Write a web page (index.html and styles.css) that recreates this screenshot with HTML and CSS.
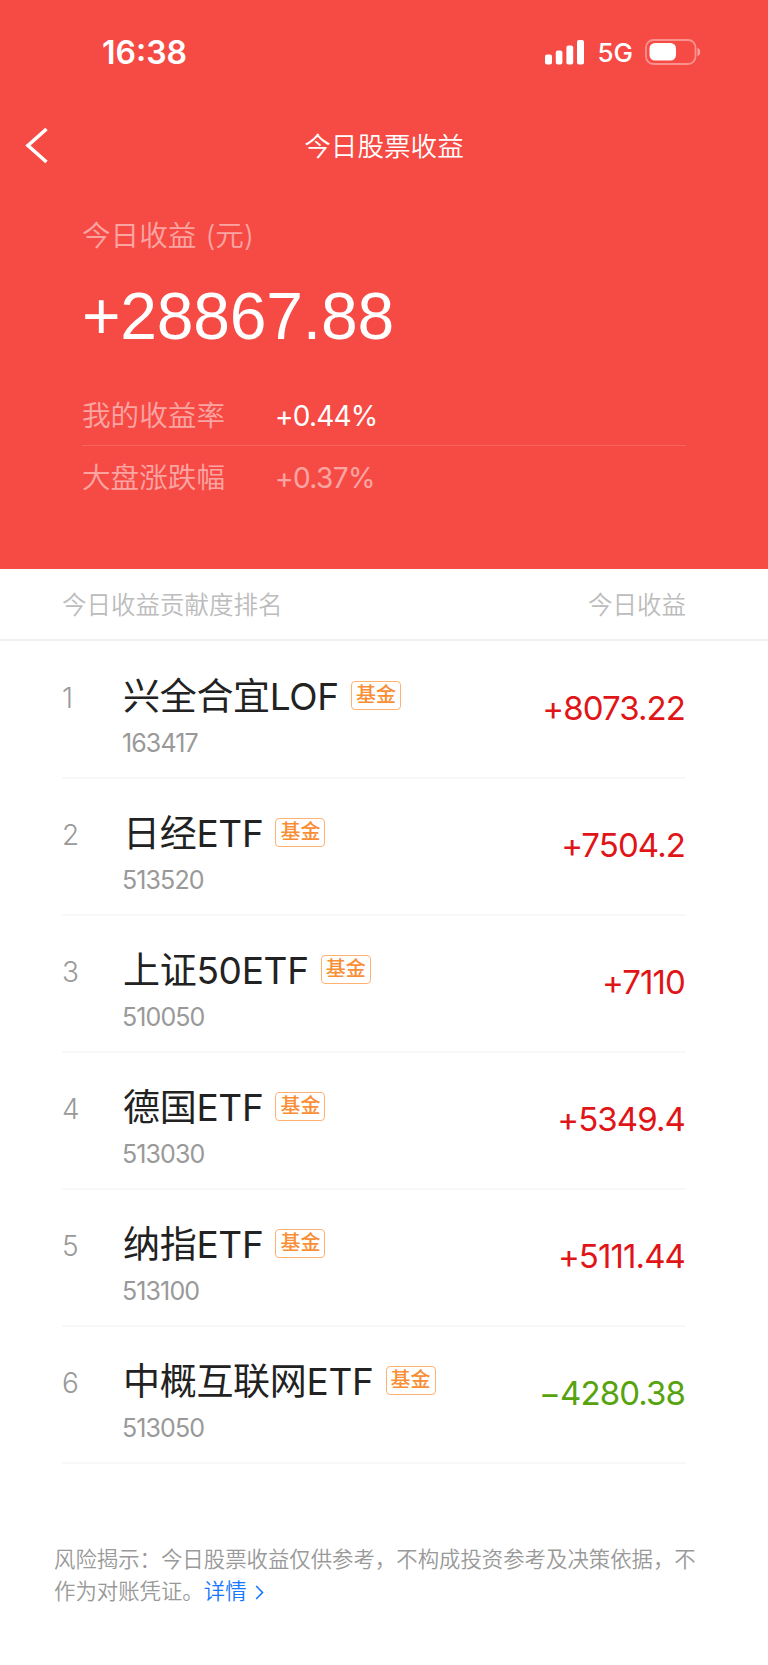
FILE: index.html
```html
<!DOCTYPE html>
<html lang="zh-CN">
<head>
  <meta charset="UTF-8" />
  <meta name="viewport" content="width=device-width, initial-scale=1.0"/>
  <title>今日股票收益</title>
  <link rel="stylesheet" href="styles.css">
</head>
<body>
  <header class="hero">
    <div class="status-bar">
      <span class="time">16:38</span>
      <div class="status-icons">
        <svg class="signal" width="39" height="25" viewBox="0 0 39 25" fill="#fff">
          <rect x="0" y="14.5" width="7" height="10" rx="2"/>
          <rect x="10.8" y="10.5" width="6.6" height="14" rx="2"/>
          <rect x="21.4" y="5.5" width="6.8" height="19" rx="2"/>
          <rect x="32" y="0" width="7" height="24.5" rx="2"/>
        </svg>
        <span class="network">5G</span>
        <svg class="battery" width="56" height="26" viewBox="0 0 56 26">
          <rect x="1" y="1" width="49.5" height="24" rx="7.5" fill="none" stroke="#fff" stroke-opacity=".4" stroke-width="1.8"/>
          <rect x="4.5" y="4" width="26.5" height="17.5" rx="5.5" fill="#fff"/>
          <path d="M52.5 9v8c3.600-1 3.600-7 0-8z" fill="#fff" fill-opacity=".5"/>
        </svg>
      </div>
    </div>

    <nav class="nav-bar">
      <svg class="back" width="24" height="38" viewBox="0 0 24 38" fill="none" stroke="#fff" stroke-width="3.6">
        <path d="M21.500 2 3 18.500l18.500 16.500"/>
      </svg>
      <h1>今日股票收益</h1>
    </nav>

    <div class="summary">
      <div class="label">今日收益 (元)</div>
      <div class="total">+28867.88</div>
      <div class="rate">
        <span class="label">我的收益率</span>
        <span class="rate-value">+0.44%</span>
      </div>
      <div class="rate muted">
        <span class="label">大盘涨跌幅</span>
        <span class="rate-value">+0.37%</span>
      </div>
    </div>
  </header>

  <div class="list-head">
    <span>今日收益贡献度排名</span>
    <span>今日收益</span>
  </div>

  <ul class="list">
    <li class="row">
      <span class="rank">1</span>
      <div class="info">
        <div class="name">兴全合宜LOF<span class="tag">基金</span></div>
        <div class="code">163417</div>
      </div>
      <span class="profit up">+8073.22</span>
    </li>
    <li class="row">
      <span class="rank">2</span>
      <div class="info">
        <div class="name">日经ETF<span class="tag">基金</span></div>
        <div class="code">513520</div>
      </div>
      <span class="profit up">+7504.2</span>
    </li>
    <li class="row">
      <span class="rank">3</span>
      <div class="info">
        <div class="name">上证50ETF<span class="tag">基金</span></div>
        <div class="code">510050</div>
      </div>
      <span class="profit up">+7110</span>
    </li>
    <li class="row">
      <span class="rank">4</span>
      <div class="info">
        <div class="name">德国ETF<span class="tag">基金</span></div>
        <div class="code">513030</div>
      </div>
      <span class="profit up">+5349.4</span>
    </li>
    <li class="row">
      <span class="rank">5</span>
      <div class="info">
        <div class="name">纳指ETF<span class="tag">基金</span></div>
        <div class="code">513100</div>
      </div>
      <span class="profit up">+5111.44</span>
    </li>
    <li class="row">
      <span class="rank">6</span>
      <div class="info">
        <div class="name">中概互联网ETF<span class="tag">基金</span></div>
        <div class="code">513050</div>
      </div>
      <span class="profit down">−4280.38</span>
    </li>
  </ul>

  <footer class="notice">
    <div>风险揭示：今日股票收益仅供参考，不构成投资参考及决策依据，不</div>
    <div class="notice-end">
      <span>作为对账凭证。</span>
      <a class="detail" href="#">详情<svg width="9" height="15" viewBox="0 0 9 15" fill="none" stroke="currentColor" stroke-width="1.6"><path d="M1.200 1 7.500 7.500 1.200 14"/></svg></a>
    </div>
  </footer>
</body>
</html>
```
FILE: styles.css
```css
:root {
  --red: #f64a45;
  --up: #e01518;
  --down: #57a30e;
  --orange: #f98e35;
}

* {
  box-sizing: border-box;
}

body {
  margin: 0;
  min-height: 1665px;
  background: #fff;
  font-family: Inter, "Noto Sans CJK SC", sans-serif;
  font-weight: 350;
}

.hero {
  height: 569px;
  background: var(--red);
  color: #fff;
}

/* status bar */
.status-bar {
  display: flex;
  justify-content: space-between;
  align-items: center;
  height: 104px;
  padding: 0 67px 0 102px;
}

.time {
  font-size: 32px;
  font-weight: 600;
}

.status-icons {
  display: flex;
  align-items: center;
}

.network {
  margin: 2px 12px 0 13px;
  font-size: 26px;
  font-weight: 450;
  line-height: 26px;
}

/* title */
.nav-bar {
  display: grid;
  grid-template-columns: 80px 1fr 80px;
  align-items: center;
  height: 84px;
}

.back {
  margin-left: 25px;
}

h1 {
  margin: 0;
  font-size: 26.6px;
  font-weight: 350;
  line-height: 40px;
  text-align: center;
}

/* summary */
.summary {
  padding: 28px 82px 0;
}

.label {
  font-size: 28.6px;
  line-height: 40px;
  opacity: 0.5;
  word-spacing: 1px;
}

.total {
  margin-top: 20px;
  margin-bottom: 29px;
  font-family: "Liberation Sans", sans-serif;
  font-size: 66px;
  font-weight: 400;
  line-height: 80px;
  letter-spacing: -0.2px;
}

.rate {
  display: flex;
  align-items: center;
  height: 61px;
  padding-top: 2px;
  border-bottom: 1px solid rgba(255, 255, 255, 0.14);
}

.rate.muted {
  border-bottom: none;
}

.rate .label {
  width: 193px;
}

.rate-value {
  font-size: 28px;
  font-weight: 400;
  letter-spacing: -0.8px;
}

.muted .rate-value {
  letter-spacing: -0.6px;
  opacity: 0.5;
}

/* list */
.list-head {
  display: flex;
  justify-content: space-between;
  align-items: center;
  height: 72px;
  padding: 0 82px 2px 62px;
  border-bottom: 2px solid #efefef;
  color: #bcbcbc;
  font-size: 24.5px;
}

.list {
  margin: 0;
  padding: 1px 82px 0 62px;
  list-style: none;
}

.row {
  display: flex;
  height: 137px;
  border-bottom: 2px solid #f8f8f8;
}

.rank {
  width: 61px;
  padding-top: 36px;
  color: #999;
  font-size: 28px;
  line-height: 40px;
}

.info {
  flex: 1;
  padding-top: 27px;
}

.name {
  display: flex;
  align-items: center;
  height: 50px;
  color: #222;
  font-size: 37px;
  font-weight: 400;
  letter-spacing: -0.3px;
}

.tag {
  height: 29px;
  margin-top: 3px;
  margin-left: 12px;
  padding: 0 4px;
  border: 1.5px solid #ffb272;
  border-radius: 4px;
  color: var(--orange);
  font-size: 20px;
  font-weight: 500;
  line-height: 27px;
  letter-spacing: 0;
}

.code {
  margin-top: 9px;
  margin-left: -1px;
  color: #999;
  font-size: 25px;
  font-weight: 400;
  line-height: 30px;
  letter-spacing: -0.9px;
}

.profit {
  padding-top: 46px;
  padding-right: 1px;
  font-size: 33px;
  font-weight: 400;
  line-height: 40px;
  letter-spacing: -0.9px;
}

.up {
  color: var(--up);
}

.down {
  color: var(--down);
}

/* footer */
.notice {
  padding: 79px 0 0 54px;
  color: #999;
  font-size: 21.4px;
  line-height: 32px;
  white-space: nowrap;
}

.notice-end {
  display: flex;
}

.detail {
  color: #1677ff;
  text-decoration: none;
}

.detail svg {
  margin-left: 8px;
  vertical-align: -1px;
}
```
